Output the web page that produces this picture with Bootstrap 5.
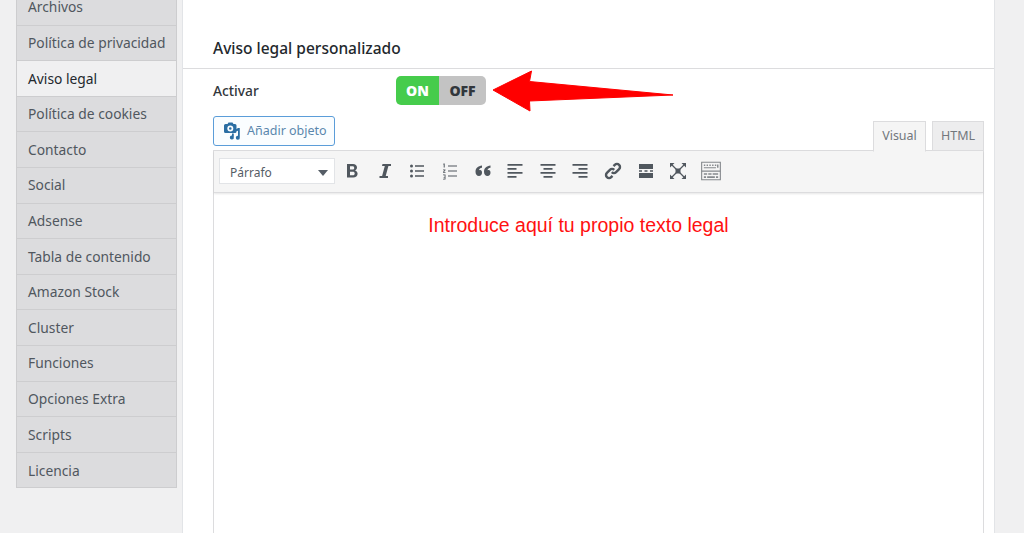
<!DOCTYPE html>
<html lang="es">
<head>
  <meta charset="UTF-8">
  <title>Aviso legal</title>
  <link href="https://cdn.jsdelivr.net/npm/bootstrap@5.3.3/dist/css/bootstrap.min.css" rel="stylesheet">
  <style>
    html, body { height: 533px; overflow: hidden; }
    body { background-color: #f0f0f1; font-family: "Noto Sans", sans-serif; font-size: 14px; color: #23282d; }
    .page-wrap { height: 533px; padding-left: 16px; padding-right: 29px; }
    .side-menu { width: 161px; margin-top: -10px; margin-right: 5px; height: 498px; background: #dcdcde; border: 1px solid #cdcdcf; border-top: 0; }
    .side-item { height: 35.6px; padding: 1px 0 0 11px; color: #50575e; border-bottom: 1px solid #cdcdcf; font-size: 13.8px; }
    .side-item:last-child { border-bottom: 0; }
    .side-item.current { background: #f0f0f1; color: #23282d; }
    .main-panel { background: #fff; border-left: 1px solid #e2e4e7; border-right: 1px solid #e2e4e7; }
    .panel-head { height: 69px; padding: 38px 0 0 30px; border-bottom: 1px solid #dcdcde; font-size: 15.5px; font-weight: 500; line-height: 20px; }
    .opt-row { height: 47px; padding: 7px 0 0 30px; }
    .opt-label { width: 183px; font-weight: 500; color: #32373c; line-height: 29px; font-size: 13.8px; }
    .switch-box { width: 90px; height: 29px; border-radius: 5px; overflow: hidden; font-family: "Open Sans", sans-serif; font-weight: 800; font-size: 14px; line-height: 29px; text-align: center; }
    .switch-on { width: 43px; background: #46cc4c; color: #fff; }
    .switch-off { width: 47px; background: #c3c3c3; color: #32373c; }
    .editor-top { padding: 0 10px 0 30px; height: 34px; }
    .add-btn { height: 30px; width: 122px; padding: 0 0 0 10px; border: 1px solid #5b9dd9; border-radius: 3px; background: #fafdff; color: #5a87ad; font-size: 12.5px; gap: 5px; }
    .add-btn span { padding-top: 1px; }
    .tab-btn { height: 30px; margin-top: 5px; margin-left: 6px; border: 1px solid #dcdcde; padding-top: 5px; font-size: 12.5px; color: #72777c; background: #ededee; text-align: center; }
    .tab-btn.tab-visual { width: 53px; height: 31px; background: #f5f5f5; border-bottom-color: #f5f5f5; position: relative; z-index: 1; }
    .tab-btn.tab-html { width: 52px; }
    .editor-box { margin: 0 10px 0 30px; height: 400px; border: 1px solid #dcdcde; }
    .tool-row { height: 42px; background: #f5f5f5; padding: 7px 0 0 5px; border-bottom: 1px solid #dcdcde; box-shadow: 0 1px 2px rgba(0,0,0,.1); }
    .block-select { width: 116px; height: 26px; background: #fff; border: 1px solid #e2e4e7; padding: 3px 6px 0 10px; font-size: 12px; color: #555d66; margin-right: 1px; }
    .drop-caret { width: 0; height: 0; border-left: 5px solid transparent; border-right: 5px solid transparent; border-top: 6px solid #555d66; }
    .tool-icon { width: 32.6px; height: 26px; }
    .tool-icon svg { width: 20px; height: 20px; fill: #50575e; }
    .tool-icon svg.kbd-icon { width: 22px; height: 22px; fill: #85898d; }
    .legal-text { padding: 19px 40px 0 0; color: #ff1111; text-align: center; font-family: "Liberation Sans", sans-serif; font-size: 19.5px; line-height: 27px; }
    .red-arrow { position: absolute; left: 490px; top: 68px; width: 186px; height: 46px; }
  </style>
</head>
<body>
  <div class="page-wrap d-flex">
    <!-- menu lateral -->
    <div class="side-menu flex-shrink-0">
      <div class="side-item d-flex align-items-center">Archivos</div>
      <div class="side-item d-flex align-items-center">Política de privacidad</div>
      <div class="side-item current d-flex align-items-center">Aviso legal</div>
      <div class="side-item d-flex align-items-center">Política de cookies</div>
      <div class="side-item d-flex align-items-center">Contacto</div>
      <div class="side-item d-flex align-items-center">Social</div>
      <div class="side-item d-flex align-items-center">Adsense</div>
      <div class="side-item d-flex align-items-center">Tabla de contenido</div>
      <div class="side-item d-flex align-items-center">Amazon Stock</div>
      <div class="side-item d-flex align-items-center">Cluster</div>
      <div class="side-item d-flex align-items-center">Funciones</div>
      <div class="side-item d-flex align-items-center">Opciones Extra</div>
      <div class="side-item d-flex align-items-center">Scripts</div>
      <div class="side-item d-flex align-items-center">Licencia</div>
    </div>

    <!-- panel principal -->
    <div class="main-panel flex-grow-1">
      <div class="panel-head">Aviso legal personalizado</div>
      <div class="opt-row d-flex">
        <div class="opt-label">Activar</div>
        <div class="switch-box d-flex">
          <div class="switch-on">ON</div>
          <div class="switch-off">OFF</div>
        </div>
      </div>
      <div class="editor-top d-flex justify-content-between">
        <button type="button" class="add-btn d-flex align-items-center">
          <svg width="18" height="18" viewBox="0 0 18 18" fill="#2b6ea3"><path fill-rule="evenodd" d="M1.500 2H3.500L4.500 .5h4L9.500 2h1.500A1.500 1.500 0 0 1 12.500 3.500v6A1.500 1.500 0 0 1 11 11H1.500A1.500 1.500 0 0 1 0 9.500v-6A1.500 1.500 0 0 1 1.500 2zM6.300 3.500a3 3 0 1 0 0 6 3 3 0 0 0 0-6zm0 1.700a1.300 1.300 0 1 1 0 2.600 1.300 1.300 0 0 1 0-2.600z"/><path d="M8 11.500h1.800v3.700a2 2 0 1 1-1.800-1.600zM14 6h1.800v9.500a2 2 0 1 1-1.800-1.700V8.800L11 9.500V8z"/></svg>
          <span>Añadir objeto</span>
        </button>
        <div class="d-flex">
          <div class="tab-btn tab-visual">Visual</div>
          <div class="tab-btn tab-html">HTML</div>
        </div>
      </div>
      <div class="editor-box">
        <div class="tool-row d-flex">
          <div class="block-select d-flex align-items-center justify-content-between"><span>Párrafo</span><span class="drop-caret"></span></div>
          <div class="tool-icon d-flex align-items-center justify-content-center"><svg viewBox="0 0 20 20"><path fill-rule="evenodd" d="M5 3h6c2.400 0 4 1.300 4 3.400 0 1.400-.8 2.500-2 3 1.600.4 2.600 1.700 2.600 3.300 0 2.400-1.800 3.800-4.400 3.800H5zm3 2.300v3.200h2.500c1.100 0 1.700-.6 1.700-1.600s-.6-1.600-1.700-1.600zm0 5.400v3.500h2.800c1.200 0 1.900-.7 1.900-1.800s-.7-1.700-1.900-1.700z"/></svg></div>
          <div class="tool-icon d-flex align-items-center justify-content-center"><svg viewBox="0 0 20 20"><path d="M7.500 3H16v2h-2.600l-2.700 10H13v2H4.500v-2h2.600L9.800 5H7z"/></svg></div>
          <div class="tool-icon d-flex align-items-center justify-content-center"><svg viewBox="0 0 20 20"><circle cx="4.500" cy="5" r="1.500"/><circle cx="4.500" cy="10" r="1.500"/><circle cx="4.500" cy="15" r="1.500"/><path d="M8 4.300h9v1.400H8zM8 9.300h9v1.400H8zM8 14.300h9v1.400H8z"/></svg></div>
          <div class="tool-icon d-flex align-items-center justify-content-center"><svg viewBox="0 0 20 20"><path d="M3.500 2.500h1.200v4h-1v-3h-.6zM3 8.500h2.500v.8L4 11h1.500v.8H3V11l1.500-1.700H3zM3 13.500h2.500v5H3v-.8h1.600v-1.100H3.500v-.7h1.100v-1.600H3zM8 4.500h9v1H8zM8 9.500h9v1H8zM8 14.500h9v1H8z"/></svg></div>
          <div class="tool-icon d-flex align-items-center justify-content-center"><svg viewBox="0 0 20 20"><path d="M9 4.500v2.200C7 7 6 8 6 9.200c.4-.2.800-.2 1.200-.2C8.300 9 9 10 9 11.700 9 13.500 7.900 15 6 15c-2.200 0-3.500-1.800-3.500-4.300C2.500 7.300 5 5 9 4.500zm8.500 0v2.200c-2 .3-3 1.300-3 2.500.4-.2.800-.2 1.200-.2 1.100 0 1.800 1 1.800 2.700 0 1.800-1.100 3.300-3 3.300-2.200 0-3.500-1.800-3.500-4.300 0-3.400 2.500-5.700 6.500-6.200z"/></svg></div>
          <div class="tool-icon d-flex align-items-center justify-content-center"><svg viewBox="0 0 20 20"><path d="M2.500 3h15v1.800h-15zM2.500 7h9v1.800h-9zM2.500 11h15v1.800h-15zM2.500 15h9v1.800h-9z"/></svg></div>
          <div class="tool-icon d-flex align-items-center justify-content-center"><svg viewBox="0 0 20 20"><path d="M2.500 3h15v1.800h-15zM5.500 7h9v1.800h-9zM2.500 11h15v1.800h-15zM5.500 15h9v1.800h-9z"/></svg></div>
          <div class="tool-icon d-flex align-items-center justify-content-center"><svg viewBox="0 0 20 20"><path d="M2.500 3h15v1.800h-15zM8.500 7h9v1.800h-9zM2.500 11h15v1.800h-15zM8.500 15h9v1.800h-9z"/></svg></div>
          <div class="tool-icon d-flex align-items-center justify-content-center"><svg viewBox="0 0 20 20"><path fill="none" stroke="#50575e" stroke-width="2.400" d="M8.800 11.200a3 3 0 0 0 4.300 0l3-3a3 3 0 0 0-4.300-4.300L10.500 5.200M11.200 8.800a3 3 0 0 0-4.300 0l-3 3a3 3 0 0 0 4.300 4.300l1.300-1.300"/></svg></div>
          <div class="tool-icon d-flex align-items-center justify-content-center"><svg viewBox="0 0 20 20"><path d="M3 3h14v5H3zM3 12h14v5H3zM3 9.300h3v1.400H3zM8.500 9.300h3v1.400h-3zM14 9.300h3v1.400h-3z"/></svg></div>
          <div class="tool-icon d-flex align-items-center justify-content-center"><svg viewBox="0 0 20 20"><path d="M7.500 7.500h5v5h-5z"/><path fill="none" stroke="#50575e" stroke-width="1.300" d="M4 4l12 12M16 4L4 16"/><path d="M2 2h4.500L2 6.500zM18 2h-4.500L18 6.500zM2 18h4.500L2 13.500zM18 18h-4.500L18 13.500z"/></svg></div>
          <div class="tool-icon d-flex align-items-center justify-content-center"><svg class="kbd-icon" viewBox="0 0 20 20"><path fill-rule="evenodd" d="M1 1.500h18v17H1zm1 1v15h16v-15z"/><path d="M1.500 9.500h17v1.200h-17zM3.500 4h1.300v1.500H3.500zM6 4h1.300v1.500H6zM8.500 4h1.300v1.500H8.500zM11 4h1.300v1.500H11zM13.500 4h1.300v1.500h-1.300zM15.500 4h1.300v3h-1.300zM3.500 6.500h11v1h-11zM3.500 12h3v1.500h-3zM7.500 12h3v1.500h-3zM11.500 12h5v1.500h-5zM3.500 14.800h2v1.500h-2zM6.500 14.800h7v1.500h-7zM14.500 14.800h2v1.500h-2z"/></svg></div>
        </div>
        <div class="legal-text">Introduce aquí tu propio texto legal</div>
      </div>
    </div>
  </div>

  <!-- flecha roja sobre la pantalla -->
  <svg class="red-arrow" viewBox="490 68 186 46"><polygon fill="#ff0000" stroke="#ff0000" stroke-width="1" stroke-linejoin="round" points="493,90 531.500,71 529.500,81.500 673,95 529.500,101 530,111"/></svg>

  <script src="https://cdn.jsdelivr.net/npm/bootstrap@5.3.3/dist/js/bootstrap.bundle.min.js"></script>
</body>
</html>
